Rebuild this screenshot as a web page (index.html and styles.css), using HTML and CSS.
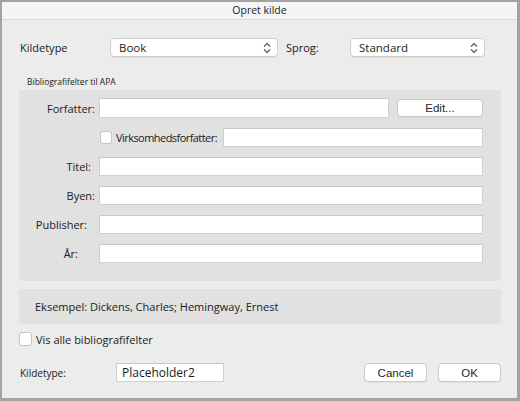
FILE: index.html
```html
<!DOCTYPE html>
<html lang="da">
<head>
  <meta charset="UTF-8">
  <title>Opret kilde</title>
  <link rel="stylesheet" href="styles.css">
</head>
<body>

  <div class="window">
    <!-- title bar -->
    <div class="titlebar">Opret kilde</div>

    <div class="content">
      <!-- source type + language -->
      <div class="top-row">
        <span class="top-label">Kildetype</span>
        <div class="popup popup-type">
          <span>Book</span>
          <svg class="updown" width="8" height="12" viewBox="0 0 8 12"><path d="M1 4.5 L4 1.5 L7 4.5 M1 7.5 L4 10.5 L7 7.5" fill="none" stroke="#555" stroke-width="1.2"/></svg>
        </div>
        <span class="lang-label">Sprog:</span>
        <div class="popup popup-lang">
          <span>Standard</span>
          <svg class="updown" width="8" height="12" viewBox="0 0 8 12"><path d="M1 4.5 L4 1.5 L7 4.5 M1 7.5 L4 10.5 L7 7.5" fill="none" stroke="#555" stroke-width="1.2"/></svg>
        </div>
      </div>

      <!-- bibliography fields -->
      <div class="group-title">Bibliografifelter til APA</div>
      <div class="group">
        <div class="field-row first">
          <label class="field-label">Forfatter:</label>
          <div class="input input-author"></div>
          <div class="button edit-btn">Edit...</div>
        </div>
        <div class="field-row">
          <span class="checkbox"></span>
          <span class="corp-label">Virksomhedsforfatter:</span>
          <div class="input grow"></div>
        </div>
        <div class="field-row">
          <label class="field-label l-title">Titel:</label>
          <div class="input grow"></div>
        </div>
        <div class="field-row">
          <label class="field-label">Byen:</label>
          <div class="input grow"></div>
        </div>
        <div class="field-row">
          <label class="field-label l-pub">Publisher:</label>
          <div class="input grow"></div>
        </div>
        <div class="field-row">
          <label class="field-label l-year">År:</label>
          <div class="input grow"></div>
        </div>
      </div>

      <!-- example -->
      <div class="example">Eksempel: Dickens, Charles; Hemingway, Ernest</div>

      <div class="show-all">
        <span class="checkbox"></span>
        <span>Vis alle bibliografifelter</span>
      </div>

      <!-- footer -->
      <div class="footer">
        <span class="tag-label">Kildetype:</span>
        <div class="input tag-input">Placeholder2</div>
        <div class="spacer"></div>
        <div class="button">Cancel</div>
        <div class="button">OK</div>
      </div>
    </div>
  </div>

</body>
</html>
```

FILE: styles.css
```css
/* page */
html, body {
  margin: 0;
  padding: 0;
  background: #ececec;
  font-family: "Open Sans", "Noto Sans", sans-serif;
  color: #1b1b1b;
}

.window {
  width: 520px;
  height: 401px;
  box-sizing: border-box;
  border-style: solid;
  border-color: #a3a3a3;
  border-width: 2px 3px 3px 2px;
  background: #ececec;
}

.titlebar {
  height: 17px;
  line-height: 17px;
  text-align: center;
  font-size: 10.5px;
  background: #f5f5f5;
  border-bottom: 1px solid #d9d9d9;
}

.content {
  padding: 18px 16px 0 17px;
}

/* top row: Kildetype / Sprog */
.top-row {
  display: flex;
  align-items: center;
  height: 19px;
  font-size: 11px;
}
.top-label {
  width: 90px;
  padding-left: 1px;
}
.lang-label {
  width: 64px;
  margin-left: 8px;
}

.popup {
  display: flex;
  align-items: center;
  justify-content: space-between;
  box-sizing: border-box;
  height: 19px;
  padding: 0 6px 0 8px;
  background: #fff;
  border: 1px solid #cfcfcf;
  border-radius: 4px;
  box-shadow: 0 1px 0 rgba(0, 0, 0, 0.06);
  font-size: 11.5px;
}
.popup-type { width: 168px; }
.popup-lang { width: 135px; }

/* group box */
.group-title {
  margin: 19px 0 0 8px;
  height: 12px;
  line-height: 12px;
  font-size: 8.5px;
}
.group {
  margin-top: 2px;
  width: 482px;
  box-sizing: border-box;
  padding: 8px 18px 18px 0;
  background: #e1e1e1;
  border-radius: 4px;
}

.field-row {
  display: flex;
  align-items: center;
  height: 19px;
  margin-top: 10px;
  font-size: 11px;
}
.field-row.first {
  height: 20px;
  margin-top: 0;
}

.field-label {
  width: 76px;
  margin-right: 4px;
  text-align: right;
}
.l-title { width: 72px; margin-right: 8px; }
.l-pub   { width: 68px; margin-right: 12px; }
.l-year  { width: 59px; margin-right: 21px; }

.input {
  box-sizing: border-box;
  height: 19px;
  background: #fff;
  border: 1px solid #d0d0d0;
  border-top-color: #c8c8c8;
}
.input-author {
  width: 290px;
  height: 20px;
}
.grow { flex: 1; }

.checkbox {
  display: inline-block;
  box-sizing: border-box;
  width: 12px;
  height: 13px;
  background: #fff;
  border: 1px solid #c4c4c4;
  border-radius: 3px;
}
.field-row .checkbox {
  margin-left: 81px;
}
.corp-label {
  margin-left: 4px;
  width: 107px;
  letter-spacing: -0.55px;
  white-space: nowrap;
}

.button {
  display: flex;
  align-items: center;
  justify-content: center;
  box-sizing: border-box;
  width: 63px;
  height: 19px;
  background: #fff;
  border: 1px solid #cacaca;
  border-radius: 4px;
  box-shadow: 0 1px 0 rgba(0, 0, 0, 0.05);
  font-family: "Liberation Sans", Arial, sans-serif;
  font-size: 11.5px;
  color: #262626;
}
.edit-btn {
  width: 86px;
  height: 18px;
  margin-left: 8px;
}

/* example strip */
.example {
  margin-top: 8px;
  width: 482px;
  height: 35px;
  line-height: 35px;
  box-sizing: border-box;
  padding-left: 16px;
  background: #e1e1e1;
  border-radius: 4px;
  font-size: 11px;
}

.show-all {
  display: flex;
  align-items: center;
  gap: 4px;
  margin-top: 8px;
  height: 14px;
  font-size: 11px;
}
.show-all .checkbox {
  width: 13px;
  height: 14px;
}

/* footer */
.footer {
  display: flex;
  align-items: center;
  margin-top: 17px;
  height: 19px;
  font-size: 10px;
}
.tag-label {
  width: 96px;
  padding-left: 1px;
}
.tag-input {
  width: 108px;
  padding-left: 5px;
  line-height: 17px;
  font-size: 12px;
}
.spacer { flex: 1; }
.footer .button + .button {
  margin-left: 11px;
}
```
